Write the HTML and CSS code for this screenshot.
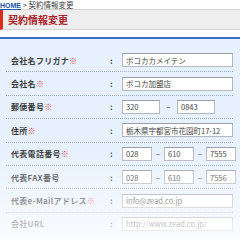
FILE: index.html
```html
<!DOCTYPE html>
<html lang="ja">
<head>
    <meta charset="UTF-8">
    <title>契約情報変更</title>
    <link rel="stylesheet" href="styles.css">
</head>
<body>
<div class="page">
    <div class="crumb"><a href="#">HOME</a> &gt; 契約情報変更</div>
    <h1 class="title">契約情報変更</h1>

    <div class="panel">
        <div class="row">
            <div class="label">会社名フリガナ<span class="req">※</span></div>
            <div class="colon">:</div>
            <div class="field"><input class="input wide" value="ポコカカメイテン"></div>
        </div>
        <div class="row">
            <div class="label">会社名<span class="req">※</span></div>
            <div class="colon">:</div>
            <div class="field"><input class="input wide" value="ポコカ加盟店"></div>
        </div>
        <div class="row">
            <div class="label">郵便番号<span class="req">※</span></div>
            <div class="colon">:</div>
            <div class="field">
                <input class="input zip" value="320">
                <span class="dash">−</span>
                <input class="input zip" value="0843">
            </div>
        </div>
        <div class="row">
            <div class="label">住所<span class="req">※</span></div>
            <div class="colon">:</div>
            <div class="field"><input class="input wide" value="栃木県宇都宮市花園町17-12"></div>
        </div>
        <div class="row">
            <div class="label">代表電話番号<span class="req">※</span></div>
            <div class="colon">:</div>
            <div class="field">
                <input class="input tel" value="028">
                <span class="dash">−</span>
                <input class="input tel" value="610">
                <span class="dash">−</span>
                <input class="input tel" value="7555">
            </div>
        </div>
        <div class="row">
            <div class="label">代表FAX番号</div>
            <div class="colon">:</div>
            <div class="field">
                <input class="input tel" value="028">
                <span class="dash">−</span>
                <input class="input tel" value="610">
                <span class="dash">−</span>
                <input class="input tel" value="7556">
            </div>
        </div>
        <div class="row">
            <div class="label">代表e-Mailアドレス<span class="req">※</span></div>
            <div class="colon">:</div>
            <div class="field"><input class="input wide" value="info@zead.co.jp"></div>
        </div>
        <div class="row">
            <div class="label">会社URL</div>
            <div class="colon">:</div>
            <div class="field"><input class="input wide" value="http://www.zead.co.jp/"></div>
        </div>
    </div>

    <div class="fade"></div>
</div>
</body>
</html>
```

FILE: styles.css
```css
html, body {
    margin: 0;
    padding: 0;
    background: #fff;
}

body {
    font-family: "Noto Sans CJK JP", "Liberation Sans", sans-serif;
    color: #333;
}

.page {
    position: relative;
    width: 240px;
    height: 240px;
    overflow: hidden;
}

.crumb {
    height: 9px;
    font-size: 7.5px;
    line-height: 9px;
    color: #444;
    white-space: nowrap;
}

.crumb a {
    color: #2255aa;
    font-family: "Liberation Sans", sans-serif;
    font-weight: bold;
    font-size: 7px;
    text-decoration: underline;
}

.title {
    margin: 0;
    height: 19px;
    padding-left: 5px;
    border-top: 1px solid #d4d4d4;
    border-bottom: 1px solid #d4d4d4;
    border-left: 3px solid #d8301c;
    background: #eeeeee;
    font-size: 10px;
    line-height: 19px;
    font-weight: bold;
    color: #a8232a;
}

.panel {
    margin-top: 7px;
    border-top: 2px solid #3d6fc0;
    background: #e7f1fd;
    padding: 10px 7px 20px 6px;
    height: 240px;
}

.row {
    display: grid;
    grid-template-columns: 97px 14px 1fr;
    align-items: center;
    height: 22.4px;
    padding-left: 5px;
    border-bottom: 1px dotted #9eb0c8;
}

.row:last-child {
    border-bottom: none;
}

.label {
    font-size: 8px;
    font-weight: bold;
    letter-spacing: 0.3px;
    color: #3c3c3c;
    white-space: nowrap;
}

.req {
    color: #e23a3a;
}

.colon {
    font-size: 8px;
    font-weight: bold;
    color: #444;
    text-align: left;
    padding-left: 2px;
}

.field {
    display: flex;
    align-items: center;
}

.input {
    box-sizing: border-box;
    height: 14px;
    margin: 0;
    padding: 0 3px;
    border: 1px solid #b5b9c0;
    border-top-color: #9a9ea6;
    background: #fff;
    font-family: "Noto Sans CJK JP", "Liberation Sans", sans-serif;
    font-size: 7.5px;
    color: #444;
}

.wide {
    width: 111px;
}

.zip {
    width: 38px;
}

.tel {
    width: 30px;
}

.dash {
    width: 12px;
    text-align: center;
    font-size: 8px;
    color: #555;
}

.zip + .dash {
    width: 17px;
}

.fade {
    position: absolute;
    left: 0;
    right: 0;
    top: 150px;
    bottom: 0;
    background: linear-gradient(rgba(255, 255, 255, 0), rgba(255, 255, 255, 0.8));
}
```
